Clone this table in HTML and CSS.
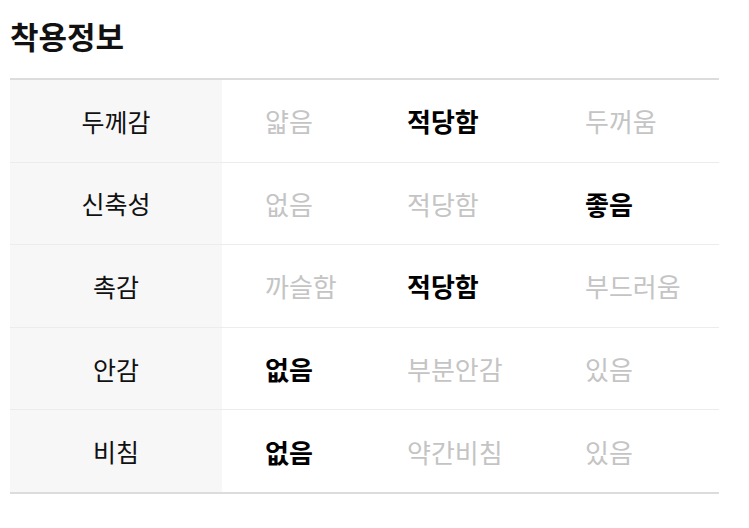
FILE: index.html
```html
<!DOCTYPE html>
<html lang="ko">
<head>
<meta charset="utf-8">
<link rel="stylesheet" href="styles.css">
</head>
<body>
<div class="wrap">
  <h2 class="title">착용정보</h2>
  <div class="table">
    <div class="row">
      <div class="label">두께감</div>
      <div class="val">얇음</div>
      <div class="val on">적당함</div>
      <div class="val">두꺼움</div>
    </div>
    <div class="row">
      <div class="label">신축성</div>
      <div class="val">없음</div>
      <div class="val">적당함</div>
      <div class="val on">좋음</div>
    </div>
    <div class="row">
      <div class="label">촉감</div>
      <div class="val">까슬함</div>
      <div class="val on">적당함</div>
      <div class="val">부드러움</div>
    </div>
    <div class="row">
      <div class="label">안감</div>
      <div class="val on">없음</div>
      <div class="val">부분안감</div>
      <div class="val">있음</div>
    </div>
    <div class="row">
      <div class="label">비침</div>
      <div class="val on">없음</div>
      <div class="val">약간비침</div>
      <div class="val">있음</div>
    </div>
  </div>
</div>
</body>
</html>
```
FILE: styles.css
```css
html, body {
  margin: 0;
  padding: 0;
  background: #fff;
}
body {
  font-family: "Noto Sans CJK KR", "Noto Sans", sans-serif;
  color: #111;
}
.wrap {
  padding: 0 30px 0 10px;
}
.title {
  margin: 0;
  height: 78px;
  font-size: 31px;
  font-weight: 700;
  line-height: 72px;
  color: #111;
}
.table {
  border-top: 2px solid #dcdcdc;
  border-bottom: 2px solid #dcdcdc;
}
.row {
  display: grid;
  grid-template-columns: 212px 142px 178px 1fr;
  height: 81.6px;
  align-items: stretch;
}
.row + .row {
  border-top: 1px solid #ececec;
}
.label {
  background: #f7f7f7;
  display: flex;
  align-items: center;
  justify-content: center;
  font-size: 25px;
  color: #111;
}
.val {
  display: flex;
  align-items: center;
  padding-left: 43px;
  font-size: 26px;
  color: #c4c4c4;
}
.val.on {
  color: #000;
  font-weight: 700;
}
```
